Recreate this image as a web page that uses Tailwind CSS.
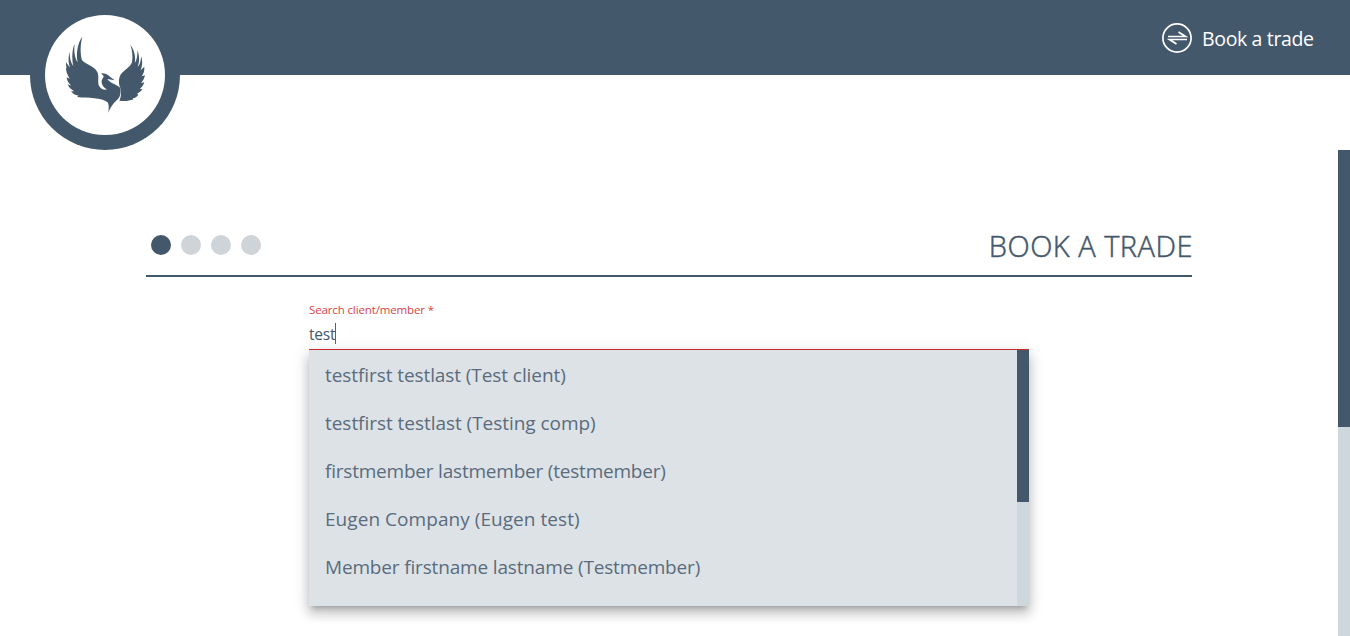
<!DOCTYPE html>
<html lang="en">
<head>
<meta charset="utf-8">
<title>Book a trade</title>
<script src="https://cdn.jsdelivr.net/npm/@tailwindcss/browser@4"></script>
</head>
<body class="relative h-[636px] overflow-hidden bg-white font-['Open_Sans','Noto_Sans',sans-serif] text-[#44586b]">
  <header class="relative flex h-[75px] items-start justify-between bg-[#44586b] pl-[30px] pr-9">
    <div class="flex size-[150px] shrink-0 items-center justify-center rounded-full bg-[#44586b]">
      <div class="flex size-[120px] items-start justify-start rounded-full bg-white pl-5 pt-5">
        <svg class="h-[78px] w-[81px]" viewBox="135 105 243 234" fill="#44586b">
          <path d="M187 110C181 130 180 162 186 180C195 193 222 197 232 216C238 230 232 246 237 257C243 267 252 271 261 268C248 261 244 251 245 242C247 234 253 231 250 227L243 220C254 219 265 224 271 231L284 241L262 237C271 251 291 253 301 264C304 281 299 293 291 300C280 309 271 322 265 338C267 326 267 314 263 307C244 291 207 295 171 291L176 287C165 286 158 281 153 274L163 274C153 269 146 262 143 253L154 257C146 250 140 241 140 232L149 236C142 225 137 211 138 202L145 210C137 202 138 191 138 187L150 203C144 186 145 168 149 156C148 174 153 188 160 199C155 176 156 147 164 132C161 151 164 176 173 187C167 162 173 128 187 110Z"/>
          <path d="M331 134C344 151 348 174 344 190C351 180 353 165 352 151C359 167 359 184 353 201C361 193 363 181 363 169C368 180 368 196 362 211L373 200C374 212 371 221 365 229L375 226C373 236 369 243 363 249L373 247C370 255 366 262 359 266L367 267C363 273 358 278 351 281L355 284C350 292 343 295 338 294L341 298C326 304 310 304 298 302C303 293 305 276 301 264C295 251 295 232 305 220C318 207 331 200 336 187C339 170 337 151 331 134Z"/>
        </svg>
      </div>
    </div>
    <div class="flex items-center gap-[10px] pt-[23px] text-white">
      <svg class="size-[30px]" viewBox="0 0 30 30" fill="none" stroke="currentColor" stroke-width="1.7">
        <circle cx="15" cy="15" r="14.1"/>
        <path d="M6 13.5H23.5L16.5 9M25 16.5H7.5L14.5 21"/>
      </svg>
      <span class="h-[30px] w-[112px] whitespace-nowrap text-[19.5px] leading-[32px] tracking-[-0.35px]">Book a trade</span>
    </div>
  </header>

  <main class="ml-[146px] w-[1046px] pt-[150px]">
    <div class="flex h-[52px] items-start justify-between border-b-2 border-[#44586b]">
      <div class="flex gap-[10px] pl-[5px] pt-[10px]">
        <span class="size-5 rounded-full bg-[#44586b]"></span>
        <span class="size-5 rounded-full bg-[#ced4d8]"></span>
        <span class="size-5 rounded-full bg-[#ced4d8]"></span>
        <span class="size-5 rounded-full bg-[#ced4d8]"></span>
      </div>
      <h1 class="-mr-px whitespace-nowrap pt-px text-[29px] font-light leading-[40px] tracking-[0.5px] [-webkit-text-stroke:0.5px_#44586b]">BOOK A TRADE</h1>
    </div>

    <div class="ml-[163px] w-[720px] pt-[25px]">
      <div class="h-4 whitespace-nowrap text-[11.5px] leading-4 tracking-[-0.13px] text-[#da4444]">Search client/member *</div>
      <div class="flex h-8 items-start border-b border-[#d32f2f] pt-[5px]">
        <span class="w-[26px] whitespace-nowrap text-[15.5px] leading-[22px] tracking-[-0.2px]">test</span>
        <span class="h-[21px] w-px bg-[#d32f2f]"></span>
      </div>
      <div class="flex h-[256px] justify-between bg-[#dde2e6] shadow-[0_5px_5px_-3px_rgba(0,0,0,0.2),0_8px_10px_1px_rgba(0,0,0,0.14),0_3px_14px_2px_rgba(0,0,0,0.12)]">
        <ul class="whitespace-nowrap pl-4 pt-px text-[19px] leading-[48px] text-[#5a6c7d]">
          <li class="tracking-[-0.08px]">testfirst testlast (Test client)</li>
          <li class="tracking-[-0.04px]">testfirst testlast (Testing comp)</li>
          <li class="tracking-[-0.21px]">firstmember lastmember (testmember)</li>
          <li class="tracking-[0.05px]">Eugen Company (Eugen test)</li>
          <li class="tracking-[-0.16px]">Member firstname lastname (Testmember)</li>
        </ul>
        <div class="w-3 bg-[#cdd7dc]"><div class="h-[152px] bg-[#44586b]"></div></div>
      </div>
    </div>
  </main>

  <div class="absolute right-0 top-[150px] h-[486px] w-3 bg-[#cdd7dc]"><div class="h-[277px] bg-[#44586b]"></div></div>
</body>
</html>
